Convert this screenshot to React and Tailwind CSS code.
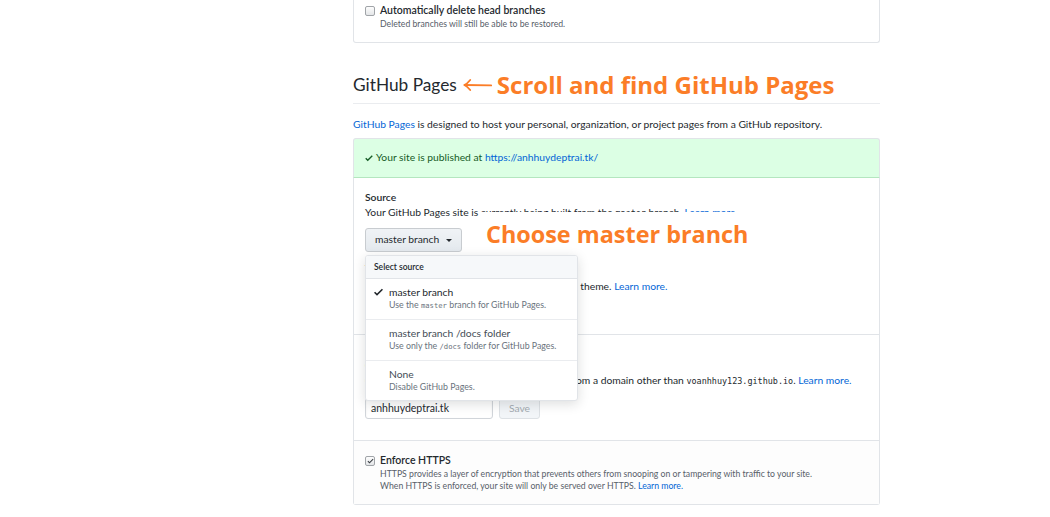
import React from "react";

const Check = ({ className }) => (
  <svg viewBox="0 0 12 16" className={className} fill="currentColor">
    <path d="M12 5l-8 8-4-4 1.5-1.5L4 10l6.5-6.5L12 5z" />
  </svg>
);

const Box = ({ checked }) => (
  <span className="mt-[3px] flex h-[10px] w-[10px] shrink-0 items-center justify-center rounded-[2px] border border-[#a0a4a8] bg-gradient-to-b from-[#fdfdfd] to-[#e4e6e8]">
    {checked && <Check className="h-[8px] w-[7px] text-[#3a3f44]" />}
  </span>
);

const Link = ({ children }) => <span className="text-[#0366d6]">{children}</span>;
const Mono = ({ children }) => (
  <span className="font-['DejaVu_Sans_Mono',monospace] text-[0.82em]">{children}</span>
);

function MenuItem({ title, desc, checked, muted }) {
  return (
    <div className="flex border-b border-[#eaecef] pt-[6px] pb-[7px] pl-[8px] last:border-b-0">
      <div className="w-[15px] pt-[1px]">
        {checked && <Check className="h-[12px] w-[9px] text-[#24292e]" />}
      </div>
      <div>
        <div className={"text-[10.3px] leading-[14px] " + (muted ? "text-[#444d56]" : "text-[#24292e]")}>
          {title}
        </div>
        <div className="text-[8.8px] leading-[12px] text-[#6a737d]">{desc}</div>
      </div>
    </div>
  );
}

export default function App() {
  return (
    <div className="min-h-[517px] w-[1050px] overflow-hidden bg-white font-['Lato','Noto_Sans',sans-serif] text-[#24292e]">
      <div className="ml-[353px] w-[527px]">
        {/* top box */}
        <div className="rounded-b-[3px] border-x border-b border-[#e1e4e8] px-[11px] pt-[3px] pb-[12px]">
          <div className="flex gap-[5px]">
            <Box />
            <div>
              <div className="text-[10.5px] font-semibold leading-[15px]">Automatically delete head branches</div>
              <div className="text-[8.7px] leading-[12px] text-[#586069]">
                Deleted branches will still be able to be restored.
              </div>
            </div>
          </div>
        </div>

        {/* heading */}
        <div className="mt-[27px] flex items-center border-b border-[#eaecef] pb-[3px]">
          <h2 className="text-[17.3px] leading-[30px] font-normal">GitHub Pages</h2>
          <svg viewBox="0 0 34 14" className="ml-[5px] h-[14px] w-[31px]" fill="none" stroke="#fb7d27" strokeWidth="2" strokeLinecap="round" strokeLinejoin="round">
            <path d="M32 7.5 L3 7" />
            <path d="M9 1.5 C7 4 5 6 2.5 7 C5 8 7 10 9 12.5" />
          </svg>
          <span className="ml-[4px] font-['Open_Sans',sans-serif] text-[24px] font-bold leading-[30px] text-[#fb7d27]">
            Scroll and find GitHub Pages
          </span>
        </div>

        <p className="mt-[12.5px] text-[10.3px] leading-[15px]">
          <Link>GitHub Pages</Link> is designed to host your personal, organization, or project pages from a GitHub
          repository.
        </p>

        {/* pages box */}
        <div className="mt-[6.5px]">
          <div className="flex h-[40px] items-center gap-[3px] rounded-t-[3px] border border-b-[#b4e6bf] border-[#e1e4e8] bg-[#dcffe4] px-[11px] text-[10.3px] text-[#165c26]">
            <Check className="h-[10px] w-[8px] text-[#165c26]" />
            <span>
              Your site is published at <Link>https://anhhuydeptrai.tk/</Link>
            </span>
          </div>

          <div className="rounded-b-[3px] border-x border-b border-[#e1e4e8]">
            {/* Source */}
            <div className="relative border-b border-[#e1e4e8] px-[11px] pt-[12px] pb-[13px]">
              <div className="text-[10.3px] font-semibold leading-[15px]">Source</div>
              <div className="text-[10.3px] leading-[15px]">
                Your GitHub Pages site is currently being built from the <Mono>master</Mono> branch.{" "}
                <Link>Learn more.</Link>
              </div>
              <div className="relative mt-[7px]">
                <div className="flex h-[24px] w-fit items-center gap-[7px] whitespace-nowrap rounded-[3px] border border-[#c8ccd0] bg-gradient-to-b from-[#f0f3f6] to-[#e4e9ee] px-[9px] text-[10.3px]">
                  master branch
                  <span className="h-0 w-0 border-x-[3px] border-t-[3px] border-x-transparent border-t-[#24292e]" />
                </div>
                <div className="absolute top-[27px] left-0 z-10 w-[213px] overflow-hidden rounded-[3px] border border-[#e1e4e8] bg-white shadow-[0_3px_12px_rgba(27,31,35,0.15)]">
                  <div className="flex h-[23px] items-center border-b border-[#e1e4e8] bg-[#f6f8fa] pl-[8px] text-[8.5px] font-semibold text-[#24292e]">
                    Select source
                  </div>
                  <MenuItem
                    checked
                    title="master branch"
                    desc={<>Use the <Mono>master</Mono> branch for GitHub Pages.</>}
                  />
                  <MenuItem
                    muted
                    title="master branch /docs folder"
                    desc={<>Use only the <Mono>/docs</Mono> folder for GitHub Pages.</>}
                  />
                  <MenuItem muted title="None" desc="Disable GitHub Pages." />
                </div>
              </div>
              <div className="mt-[9px] text-[10.3px] font-semibold leading-[15px]">Theme chooser</div>
              <div className="mt-[3px] text-[10.3px] leading-[15px]">
                Select a theme to publish your site with a Jekyll theme. <Link>Learn more.</Link>
              </div>
              <div className="mt-[6px] flex h-[21px] w-fit items-center whitespace-nowrap rounded-[3px] border border-[#c8ccd0] bg-[#eff3f6] px-[9px] text-[10.3px]">
                Change theme
              </div>

              {/* annotation */}
              <div className="absolute top-[34px] left-[125px] whitespace-nowrap bg-white pr-[8px] pl-[7px] pt-[7px] pb-[2px] font-['Open_Sans',sans-serif] text-[23.4px] font-bold leading-[30px] text-[#fb7d27]">
                Choose master branch
              </div>
            </div>

            {/* Custom domain */}
            <div className="border-b border-[#e1e4e8] px-[11px] pt-[23px] pb-[21px]">
              <div className="text-[10.3px] font-semibold leading-[15px]">Custom domain</div>
              <div className="text-[10.3px] leading-[15px]">
                Custom domains allow you to serve your site from a domain other than{" "}
                <Mono>voanhhuy123.github.io</Mono>. <Link>Learn more.</Link>
              </div>
              <div className="mt-[9px] flex gap-[6px]">
                <div className="flex h-[21px] w-[128px] items-center rounded-[3px] border border-[#d1d5da] bg-white px-[5px] text-[10.5px] shadow-[inset_0_1px_2px_rgba(27,31,35,0.075)]">
                  anhhuydeptrai.tk
                </div>
                <div className="flex h-[21px] w-[41px] items-center justify-center rounded-[3px] border border-[#dde1e5] bg-[#f2f5f8] text-[10.3px] text-[#a3aab1]">
                  Save
                </div>
              </div>
            </div>

            {/* Enforce HTTPS */}
            <div className="bg-[#fdfdfd] px-[11px] pt-[12px] pb-[12px]">
              <div className="flex gap-[5px]">
                <Box checked />
                <div>
                  <div className="text-[10.5px] font-semibold leading-[15px]">Enforce HTTPS</div>
                  <div className="text-[8.7px] leading-[12px] text-[#586069]">
                    HTTPS provides a layer of encryption that prevents others from snooping on or tampering with traffic
                    to your site.
                  </div>
                  <div className="text-[8.7px] leading-[12px] text-[#586069]">
                    When HTTPS is enforced, your site will only be served over HTTPS. <Link>Learn more.</Link>
                  </div>
                </div>
              </div>
            </div>
          </div>
        </div>
      </div>
    </div>
  );
}
